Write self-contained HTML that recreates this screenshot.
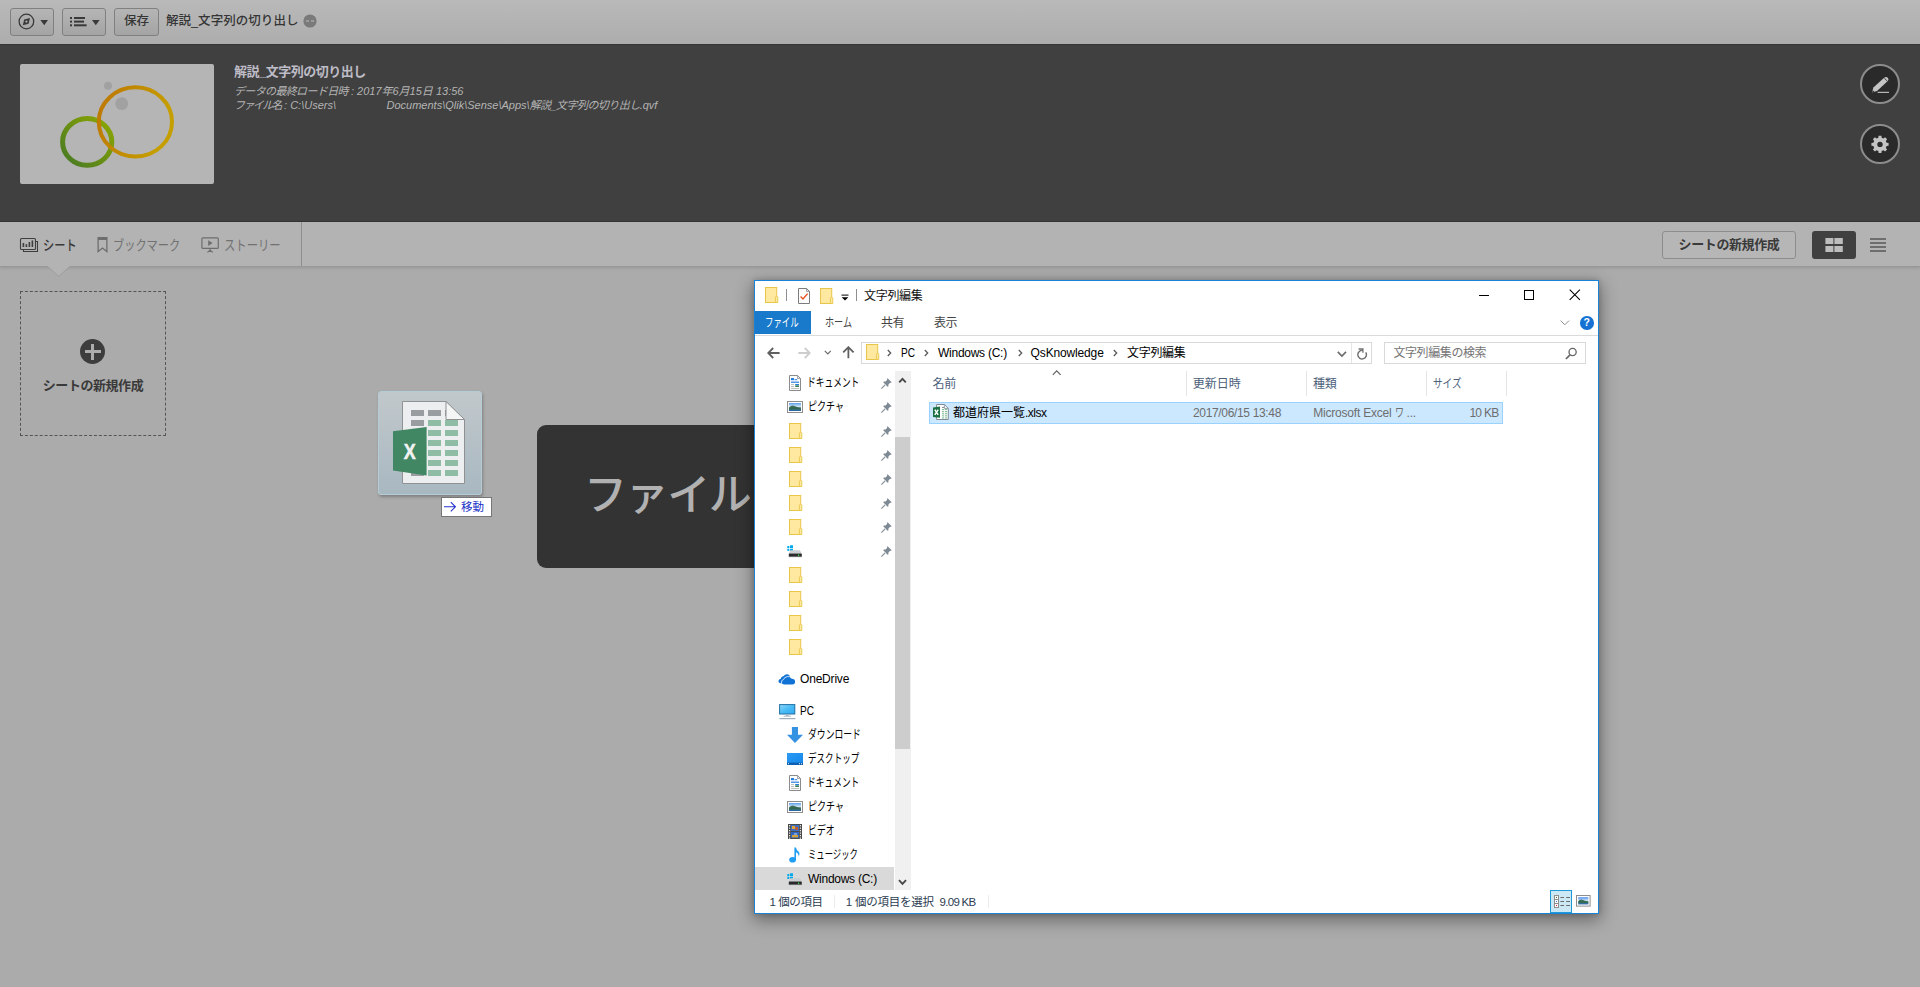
<!DOCTYPE html>
<html lang="ja">
<head>
<meta charset="utf-8">
<title>解説_文字列の切り出し</title>
<style>
html,body{margin:0;padding:0;}
body{width:1920px;height:987px;overflow:hidden;position:relative;background:#ababab;
 font-family:"Liberation Sans","Noto Sans CJK JP",sans-serif;color:#333;}
.abs{position:absolute;}
/* ---------- Qlik top toolbar ---------- */
#topbar{left:0;top:0;width:1920px;height:44px;background:linear-gradient(#b9b9b9,#adadad);}
.tbtn{position:absolute;top:8px;height:26px;border:1px solid #808080;border-radius:3px;
 background:linear-gradient(#b5b5b5,#a4a4a4);box-sizing:content-box;}
#apptitle{left:166px;top:11px;font-size:12.5px;line-height:20px;color:#353535;letter-spacing:.05px;white-space:nowrap;font-weight:500;}
/* ---------- dark header ---------- */
#hdr{left:0;top:44px;width:1920px;height:178px;background:#404040;box-shadow:inset 0 1px 0 #363636, inset 0 -1px 0 #353535;}
#thumb{left:20px;top:64px;width:194px;height:120px;background:#b5b5b5;border-radius:2px;}
#htitle{left:234px;top:63px;font-size:13px;line-height:18px;color:#bebcc6;font-weight:bold;letter-spacing:-.5px;white-space:nowrap;}
.hsub{left:234px;font-size:11px;line-height:14px;color:#b4b4b4;font-style:italic;white-space:nowrap;}
.circbtn{width:36px;height:36px;border:2px solid #8c8c8c;position:absolute;border-radius:50%;background:#2a2a2a;box-sizing:content-box;}
/* ---------- sub toolbar ---------- */
#subbar{left:0;top:222px;width:1920px;height:44px;background:#b3b3b3;border-bottom:1px solid #999;box-shadow:0 1px 3px rgba(0,0,0,.12);}
.tab{position:absolute;top:236px;font-size:14px;line-height:18px;white-space:nowrap;}
/* ---------- new sheet tile ---------- */
#newsheet{left:20px;top:291px;width:144px;height:143px;border:1px dashed #555;}
/* ---------- explorer ---------- */
#exp{left:754px;top:280px;width:843px;height:632px;background:#fff;border:1px solid #1883d7;
 box-shadow:0 5px 16px 1px rgba(0,0,0,.40), 0 0 5px rgba(0,0,0,.16);font-size:12px;color:#000;overflow:hidden;}
#exp .abs{position:absolute;}
#exp .t{font-size:12px;line-height:16px;white-space:nowrap;}
#exp .k{transform-origin:0 50%;}
#exp .k2{display:inline-block;transform:scaleX(.75);transform-origin:0 50%;}
</style>
</head>
<body>
<!-- TOPBAR -->
<div id="topbar" class="abs">
 <div class="tbtn" style="left:10px;width:42px;">
  <svg class="abs" style="left:0;top:0" width="42" height="26" viewBox="0 0 42 26">
   <circle cx="15.4" cy="12.5" r="7.3" fill="none" stroke="#3a3a3a" stroke-width="1.3"/>
   <path d="M19 9 L17.6 14.8 L11.8 16.2 L13.2 10.4 Z" fill="#3a3a3a"/>
   <circle cx="15.4" cy="12.6" r="1.1" fill="#b2b2b2"/>
   <path d="M29.4 11 L37 11 L33.2 16.2 Z" fill="#3a3a3a"/>
  </svg>
 </div>
 <div class="tbtn" style="left:62px;width:42px;">
  <svg class="abs" style="left:0;top:0" width="42" height="26" viewBox="0 0 42 26">
   <g fill="#3a3a3a">
    <rect x="7" y="8" width="2" height="2"/><rect x="11" y="8" width="11" height="2"/>
    <rect x="7" y="11.6" width="2" height="2"/><rect x="11" y="11.6" width="10" height="2"/>
    <rect x="7" y="15.3" width="2" height="2"/><rect x="11" y="15.3" width="12.6" height="2"/>
    <path d="M29 11 L36.6 11 L32.8 16.2 Z"/>
   </g>
  </svg>
 </div>
 <div class="tbtn" style="left:114px;width:43px;text-align:center;font-size:12.5px;line-height:25px;color:#353535;font-weight:500;">保存</div>
 <div id="apptitle" class="abs">解説_文字列の切り出し</div>
 <svg class="abs" style="left:302px;top:13.5px" width="16" height="14" viewBox="0 0 16 14">
  <circle cx="8" cy="7" r="6.6" fill="#7a7a7a"/>
  <rect x="4" y="6.4" width="3" height="1.2" fill="#b4b4b4"/><rect x="9" y="6.4" width="3" height="1.2" fill="#b4b4b4"/>
 </svg>
</div>
<!-- HEADER -->
<div id="hdr" class="abs"></div>
<div id="thumb" class="abs">
 <svg width="194" height="120" viewBox="0 0 194 120">
  <defs>
   <linearGradient id="gg" x1="0" y1="1" x2="1" y2="0"><stop offset="0" stop-color="#457826"/><stop offset="1" stop-color="#8fa800"/></linearGradient>
   <linearGradient id="og" x1="0" y1="0" x2="1" y2="0.3"><stop offset="0" stop-color="#bd7600"/><stop offset="1" stop-color="#c59f00"/></linearGradient>
  </defs>
  <circle cx="88" cy="21.7" r="4" fill="#a1a1a1"/>
  <circle cx="101.7" cy="39.6" r="6.4" fill="#a1a1a1"/>
  <ellipse cx="67.2" cy="77.9" rx="24.6" ry="23.4" fill="none" stroke="url(#gg)" stroke-width="5"/>
  <ellipse cx="115.4" cy="57.9" rx="36.6" ry="34.6" fill="none" stroke="url(#og)" stroke-width="4"/>
 </svg>
</div>
<div id="htitle" class="abs">解説_文字列の切り出し</div>
<div class="hsub abs" style="top:84px;"><span id="h1a" style="letter-spacing:-.65px">データの最終ロード日時</span> : 2017年6月15日 13:56</div>
<div class="hsub abs" style="top:98px;"><span id="h2a" style="letter-spacing:-1.6px">ファイル名</span>  : C:\Users\</div>
<div class="hsub abs" id="h2b" style="top:98px;left:386.5px;">Documents\Qlik\Sense\Apps\<span style="letter-spacing:-.55px">解説_文字列の切り出し</span>.qvf</div>
<div class="circbtn abs" style="left:1860px;top:64px;">
 <svg class="abs" style="left:-2px;top:-2px" width="40" height="40" viewBox="0 0 40 40">
  <path d="M12 28.6 L13.4 23.4 L24.4 13.4 Q26.2 12.2 27.8 13.8 Q29.2 15.6 27.8 17 L17 27 Z" fill="#c4c4c4"/>
  <path d="M12.2 28.4 L12.8 26.3 L14.3 27.8 Z" fill="#2a2a2a"/>
  <path d="M24.2 14 L27.4 17.2" stroke="#2a2a2a" stroke-width="0.9"/>
  <rect x="17.6" y="27.8" width="11.4" height="1.1" fill="#c4c4c4"/>
 </svg>
</div>
<div class="circbtn abs" style="left:1860px;top:124px;">
 <svg class="abs" style="left:-2px;top:-2px" width="40" height="40" viewBox="0 0 40 40">
  <path d="M26.60 18.76 L28.58 18.97 L28.58 21.83 L26.60 22.04 L25.83 23.91 L27.08 25.46 L25.06 27.48 L23.51 26.23 L21.64 27.00 L21.43 28.98 L18.57 28.98 L18.36 27.00 L16.49 26.23 L14.94 27.48 L12.92 25.46 L14.17 23.91 L13.40 22.04 L11.42 21.83 L11.42 18.97 L13.40 18.76 L14.17 16.89 L12.92 15.34 L14.94 13.32 L16.49 14.57 L18.36 13.80 L18.57 11.82 L21.43 11.82 L21.64 13.80 L23.51 14.57 L25.06 13.32 L27.08 15.34 L25.83 16.89 Z" fill="#c4c4c4"/>
  <circle cx="20" cy="20.4" r="2.7" fill="#2a2a2a"/>
 </svg>
</div>
<!-- SUBBAR -->
<div id="subbar" class="abs"></div>
<svg class="abs" style="left:16px;top:232px" width="30" height="26" viewBox="0 0 30 26">
 <g fill="none" stroke="#3e3e3e" stroke-width="1.1">
  <path d="M7.5 17.5 V19.5 H21.5 V9.5 H19.5"/>
  <rect x="4.5" y="6.5" width="15" height="11" rx="1"/>
 </g>
 <g fill="#3e3e3e"><rect x="6.6" y="11" width="1.6" height="4"/><rect x="9.6" y="12.2" width="1.6" height="2.8"/><rect x="12.6" y="10" width="1.6" height="5"/><rect x="15.6" y="8.4" width="1.6" height="6.6"/></g>
</svg>
<div class="tab" id="t1" style="left:42.8px;color:#3a3a3a;font-weight:500;transform:scaleX(.80);transform-origin:0 50%;">シート</div>
<svg class="abs" style="left:94px;top:234px" width="18" height="22" viewBox="0 0 18 22">
 <path d="M4.1 3.6 H12.9 V17.6 L8.5 14 L4.1 17.6 Z" fill="none" stroke="#6e6e6e" stroke-width="1.3"/>
 <rect x="4" y="3.4" width="9" height="2.6" fill="#6e6e6e"/>
</svg>
<div class="tab" id="t2" style="left:113px;color:#717171;transform:scaleX(.80);transform-origin:0 50%;">ブックマーク</div>
<svg class="abs" style="left:198px;top:234px" width="24" height="22" viewBox="0 0 24 22">
 <rect x="3.9" y="3.8" width="16.4" height="10.6" rx="1" fill="none" stroke="#6e6e6e" stroke-width="1.2"/>
 <path d="M10.2 6.2 L14.6 9.1 L10.2 12 Z" fill="#6e6e6e"/>
 <path d="M12.1 14.6 V16.4 M9.4 18.4 L12.1 16.2 L14.8 18.4" fill="none" stroke="#6e6e6e" stroke-width="1.2"/>
</svg>
<div class="tab" id="t3" style="left:224px;color:#717171;transform:scaleX(.81);transform-origin:0 50%;">ストーリー</div>
<div class="abs" style="left:301px;top:222px;width:1px;height:44px;background:#8e8e8e;"></div>
<svg class="abs" style="left:46px;top:266px" width="26" height="12" viewBox="0 0 26 12">
 <path d="M1.5 0 L12.7 10.2 L23.9 0 Z" fill="#b3b3b3"/>
 <path d="M1.5 0.5 L12.7 10.4 L23.9 0.5" fill="none" stroke="#9e9e9e" stroke-width="1"/>
</svg>
<div class="abs" id="nsb" style="left:1662px;top:231px;width:132px;height:26px;border:1px solid #8d8d8d;border-radius:3px;background:#b6b6b6;font-size:13px;font-weight:bold;line-height:26px;text-align:center;color:#3a3a3a;letter-spacing:-.4px;">シートの新規作成</div>
<div class="abs" style="left:1812px;top:231px;width:44px;height:28px;border-radius:3px;background:#404040;">
 <svg class="abs" style="left:0;top:0" width="44" height="28" viewBox="0 0 44 28"><g fill="#bdbdbd"><rect x="13.4" y="7" width="8" height="6"/><rect x="22.4" y="7" width="8.4" height="6"/><rect x="13.4" y="15" width="8" height="6"/><rect x="22.4" y="15" width="8.4" height="6"/></g></svg>
</div>
<svg class="abs" style="left:1866px;top:233px" width="24" height="24" viewBox="0 0 24 24"><g fill="#6e6e6e"><rect x="4" y="5" width="16" height="2"/><rect x="4" y="9" width="16" height="2"/><rect x="4" y="13" width="16" height="2"/><rect x="4" y="17" width="16" height="2"/></g></svg>
<div id="newsheet" class="abs"></div>
<div class="abs" style="left:80px;top:339px;width:25px;height:25px;border-radius:50%;background:#3d3d3d;"></div>
<div class="abs" style="left:84.5px;top:350px;width:16px;height:3px;background:#adadad;"></div>
<div class="abs" style="left:91px;top:343.5px;width:3px;height:16px;background:#adadad;"></div>
<div class="abs" id="nst" style="left:20px;top:377px;width:146px;text-align:center;font-size:13px;line-height:18px;font-weight:bold;color:#3a3a3a;letter-spacing:-.45px;white-space:nowrap;">シートの新規作成</div>
<!-- DRAG -->
<div class="abs" style="left:537px;top:425px;width:700px;height:143px;background:#333;border-radius:9px;"></div>
<div class="abs" id="droptxt" style="left:584px;top:463px;font-size:43px;line-height:64px;color:#b1b1b1;white-space:nowrap;letter-spacing:-1.4px;font-weight:500;">ファイル<span style="padding-left:16px">をドロップ</span></div>
<div class="abs" style="left:378px;top:391px;width:102px;height:102px;border:1px solid #b4ccd6;border-radius:3px;background:linear-gradient(#c1c8cb,#a8b8c1);box-shadow:1px 2px 3px rgba(0,0,0,.25);">
 <svg class="abs" style="left:-0.8px;top:-0.8px" width="102" height="102" viewBox="0 0 102 102">
  <path d="M24.5 10.5 H68 L86.5 28.5 V92.5 H24.5 Z" fill="#eceeef" stroke="#8f9193" stroke-width="1"/>
  <rect x="33" y="19" width="13" height="6" fill="#9a9d9f"/><rect x="50" y="19" width="13" height="6" fill="#9a9d9f"/><rect x="67" y="19" width="3" height="6" fill="#9a9d9f"/><rect x="33" y="29" width="13" height="6" fill="#9a9d9f"/><rect x="50" y="29" width="13" height="6" fill="#8ebca4"/><rect x="67" y="29" width="13" height="6" fill="#8ebca4"/><rect x="33" y="39" width="13" height="6" fill="#9a9d9f"/><rect x="50" y="39" width="13" height="6" fill="#8ebca4"/><rect x="67" y="39" width="13" height="6" fill="#8ebca4"/><rect x="33" y="49" width="13" height="6" fill="#9a9d9f"/><rect x="50" y="49" width="13" height="6" fill="#8ebca4"/><rect x="67" y="49" width="13" height="6" fill="#8ebca4"/><rect x="33" y="59" width="13" height="6" fill="#9a9d9f"/><rect x="50" y="59" width="13" height="6" fill="#8ebca4"/><rect x="67" y="59" width="13" height="6" fill="#8ebca4"/><rect x="33" y="69" width="13" height="6" fill="#9a9d9f"/><rect x="50" y="69" width="13" height="6" fill="#8ebca4"/><rect x="67" y="69" width="13" height="6" fill="#8ebca4"/><rect x="33" y="79" width="13" height="6" fill="#9a9d9f"/><rect x="50" y="79" width="13" height="6" fill="#8ebca4"/><rect x="67" y="79" width="13" height="6" fill="#8ebca4"/>
  <path d="M68 10.5 V28.5 H86.5 Z" fill="#f4f5f5" stroke="#8f9193" stroke-width="1" stroke-linejoin="round"/>
  <path d="M15 40.2 L48.6 36 V84.6 L15 79.6 Z" fill="#418764"/>
  <text x="31.8" y="68" text-anchor="middle" font-family="Liberation Sans, sans-serif" font-weight="bold" font-size="22" fill="#f2f2f2" stroke="#f2f2f2" stroke-width="0.5" textLength="12" lengthAdjust="spacingAndGlyphs">X</text>
 </svg>
</div>
<div class="abs" style="left:441px;top:497px;width:49px;height:18px;border:1px solid #767676;background:#fff;"></div>
<svg class="abs" style="left:443px;top:499px" width="16" height="16" viewBox="0 0 16 16"><path d="M1 7.8 H12 M7.8 3.2 L12.4 7.8 L7.8 12.4" fill="none" stroke="#2433cc" stroke-width="1.1"/></svg>
<div class="abs" id="movetxt" style="left:461px;top:498px;font-size:11.5px;line-height:18px;color:#2030c8;white-space:nowrap;">移動</div>
<!-- EXPLORER -->
<div id="exp" class="abs">
<svg class="abs" style="left:10px;top:6px;" width="14" height="16" viewBox="0 0 14 16"><rect x="0.5" y="0.5" width="11.2" height="15" fill="#ffe9a0" stroke="#e8c64c"/><path d="M10.4 15.5 V10.4 Q10.4 9.3 11.6 9.3 Q12.8 9.3 12.8 10.4 V15.5 Z" fill="#ffe9a0" stroke="#e8c64c" stroke-width="0.9"/></svg>
<div class="abs" style="left:31px;top:8px;width:1px;height:12px;background:#8f8f8f;"></div>
<svg class="abs" style="left:43px;top:7px;" width="13" height="16" viewBox="0 0 13 16"><path d="M0.5 0.5 H8.6 L11.5 3.4 V15.5 H0.5 Z" fill="#fdfdfd" stroke="#7c7c7c"/><path d="M8.6 0.5 V3.4 H11.5" fill="none" stroke="#7c7c7c" stroke-width="0.8"/><path d="M2.6 8.6 L5 11 L9.6 5.6" fill="none" stroke="#e8521e" stroke-width="1.4"/></svg>
<svg class="abs" style="left:65px;top:7px;" width="14" height="16" viewBox="0 0 14 16"><rect x="0.5" y="0.5" width="11.2" height="15" fill="#ffe9a0" stroke="#e8c64c"/><path d="M10.4 15.5 V10.4 Q10.4 9.3 11.6 9.3 Q12.8 9.3 12.8 10.4 V15.5 Z" fill="#ffe9a0" stroke="#e8c64c" stroke-width="0.9"/></svg>
<svg class="abs" style="left:85.5px;top:12.8px;" width="9" height="8" viewBox="0 0 9 8"><rect x="0.5" y="0.6" width="7" height="1" fill="#000"/><path d="M0.6 3.2 H7.4 L4 6.6 Z" fill="#000"/></svg>
<div class="abs" style="left:101px;top:8px;width:1px;height:12px;background:#8f8f8f;"></div>
<div class="abs t" id="x_title" style="left:109px;top:7px;letter-spacing:-.3px;color:#111;">文字列編集</div>
<div class="abs" style="left:724px;top:14px;width:10px;height:1px;background:#000;"></div>
<div class="abs" style="left:769px;top:9px;width:8px;height:8px;border:1px solid #000;"></div>
<svg class="abs" style="left:814.2px;top:8.2px;" width="12" height="12" viewBox="0 0 12 12"><path d="M0.7 0.7 L10.9 10.9 M10.9 0.7 L0.7 10.9" stroke="#000" stroke-width="1.05" fill="none"/></svg>
<div class="abs" style="left:0px;top:30px;width:56px;height:23px;background:#1979ca;"></div>
<div class="abs t k" id="x_file" style="left:10.4px;top:33.5px;color:#fff;transform:scaleX(.70);">ファイル</div>
<div class="abs t k" id="x_home" style="left:69.5px;top:33.5px;color:#444;transform:scaleX(.76);">ホーム</div>
<div class="abs t" id="x_share" style="left:126px;top:33.5px;color:#444;letter-spacing:-.6px;">共有</div>
<div class="abs t" id="x_view" style="left:179px;top:33.5px;color:#444;letter-spacing:-.4px;">表示</div>
<svg class="abs" style="left:805.4px;top:39.2px;" width="10" height="6" viewBox="0 0 10 6"><path d="M0.6 0.6 L4.8 4.8 L9 0.6" fill="none" stroke="#8a8a8a" stroke-width="1"/></svg>
<div class="abs" style="left:825px;top:35.2px;width:13.6px;height:13.6px;border-radius:50%;background:#1572d3;color:#fff;font:bold 10.5px/13.6px 'Liberation Sans',sans-serif;text-align:center;">?</div>
<div class="abs" style="left:0px;top:54px;width:843px;height:1px;background:#dadbdc;"></div>
<svg class="abs" style="left:12px;top:66px;" width="14" height="12" viewBox="0 0 14 12"><path d="M12.6 6 H1.4 M6.2 1 L1.2 6 L6.2 11" fill="none" stroke="#606060" stroke-width="1.8"/></svg>
<svg class="abs" style="left:42px;top:66px;" width="14" height="12" viewBox="0 0 14 12"><path d="M1.4 6 H12.6 M7.8 1 L12.8 6 L7.8 11" fill="none" stroke="#cdcdcd" stroke-width="1.8"/></svg>
<svg class="abs" style="left:68.6px;top:69px;" width="8" height="5" viewBox="0 0 8 5"><path d="M0.8 0.8 L3.8 3.8 L6.8 0.8" fill="none" stroke="#6a6a6a" stroke-width="1.2"/></svg>
<svg class="abs" style="left:86.8px;top:65.4px;" width="13" height="13" viewBox="0 0 13 13"><path d="M6.4 12.2 V1.4 M1.2 6.4 L6.4 1.2 L11.6 6.4" fill="none" stroke="#606060" stroke-width="1.8"/></svg>
<div class="abs" style="left:106px;top:61px;width:509px;height:20px;border:1px solid #d9d9d9;background:#fff;"></div>
<svg class="abs" style="left:111px;top:63px;" width="14" height="16" viewBox="0 0 14 16"><rect x="0.5" y="0.5" width="11.2" height="15" fill="#ffe9a0" stroke="#e8c64c"/><path d="M10.4 15.5 V10.4 Q10.4 9.3 11.6 9.3 Q12.8 9.3 12.8 10.4 V15.5 Z" fill="#ffe9a0" stroke="#e8c64c" stroke-width="0.9"/></svg>
<svg class="abs" style="left:132px;top:68.4px;" width="5" height="8" viewBox="0 0 5 8"><path d="M0.8 1 L3.7 4 L0.8 7" fill="none" stroke="#5a5a5a" stroke-width="1.3"/></svg>
<svg class="abs" style="left:169px;top:68.4px;" width="5" height="8" viewBox="0 0 5 8"><path d="M0.8 1 L3.7 4 L0.8 7" fill="none" stroke="#5a5a5a" stroke-width="1.3"/></svg>
<svg class="abs" style="left:262.6px;top:68.4px;" width="5" height="8" viewBox="0 0 5 8"><path d="M0.8 1 L3.7 4 L0.8 7" fill="none" stroke="#5a5a5a" stroke-width="1.3"/></svg>
<svg class="abs" style="left:358.2px;top:68.4px;" width="5" height="8" viewBox="0 0 5 8"><path d="M0.8 1 L3.7 4 L0.8 7" fill="none" stroke="#5a5a5a" stroke-width="1.3"/></svg>
<div class="abs t k" id="x_pc" style="left:146.2px;top:63.5px;transform:scaleX(.84);">PC</div>
<div class="abs t" id="x_win" style="left:183px;top:63.5px;letter-spacing:-.26px;">Windows (C:)</div>
<div class="abs t" id="x_qs" style="left:275.6px;top:63.5px;letter-spacing:-.15px;">QsKnowledge</div>
<div class="abs t" id="x_cur" style="left:372px;top:63.5px;letter-spacing:-.3px;">文字列編集</div>
<svg class="abs" style="left:582px;top:70px;" width="10" height="7" viewBox="0 0 10 7"><path d="M0.8 0.9 L4.9 5 L9 0.9" fill="none" stroke="#6a6a6a" stroke-width="1.6"/></svg>
<div class="abs" style="left:596px;top:62px;width:1px;height:20px;background:#e5e5e5;"></div>
<svg class="abs" style="left:600.8px;top:65.6px;" width="12" height="13" viewBox="0 0 12 13"><path d="M6.6 3.4 A4.3 4.3 0 1 0 9.7 5.3" fill="none" stroke="#6e6e6e" stroke-width="1.4"/><path d="M2.6 2 H6.9 V5.8" fill="none" stroke="#6e6e6e" stroke-width="1.3"/></svg>
<div class="abs" style="left:629px;top:61px;width:200px;height:20px;border:1px solid #d9d9d9;background:#fff;"></div>
<div class="abs t" id="x_search" style="left:638.4px;top:64px;color:#757575;letter-spacing:-.4px;">文字列編集の検索</div>
<svg class="abs" style="left:810px;top:66.4px;" width="13" height="13" viewBox="0 0 13 13"><circle cx="7.6" cy="5" r="3.6" fill="none" stroke="#666" stroke-width="1.3"/><path d="M5 7.8 L0.9 12" stroke="#666" stroke-width="1.7" fill="none"/></svg>
<svg class="abs" style="left:296.6px;top:89.4px;" width="10" height="6" viewBox="0 0 10 6"><path d="M0.8 4.8 L4.7 0.9 L8.6 4.8" fill="none" stroke="#606060" stroke-width="1.2"/></svg>
<div class="abs" style="left:431px;top:90px;width:1px;height:25px;background:#e5e5e5;"></div>
<div class="abs" style="left:551px;top:90px;width:1px;height:25px;background:#e5e5e5;"></div>
<div class="abs" style="left:671px;top:90px;width:1px;height:25px;background:#e5e5e5;"></div>
<div class="abs" style="left:751px;top:90px;width:1px;height:25px;background:#e5e5e5;"></div>
<div class="abs t" id="x_hname" style="left:177.5px;top:95px;color:#4c607a;letter-spacing:-.3px;">名前</div>
<div class="abs t" id="x_hdate" style="left:437.8px;top:95px;color:#4c607a;letter-spacing:0px;">更新日時</div>
<div class="abs t" id="x_htype" style="left:558px;top:95px;color:#4c607a;letter-spacing:-.3px;">種類</div>
<div class="abs t k" id="x_hsize" style="left:678px;top:95px;color:#4c607a;transform:scaleX(.80);">サイズ</div>
<div class="abs" style="left:174px;top:121px;width:572px;height:20px;border:1px solid #99d1ff;background:#cce8ff;"></div>
<svg class="abs" style="left:178px;top:123px;" width="16" height="16" viewBox="0 0 16 16"><path d="M3.6 0.5 H11.4 L15.3 4.4 V15.5 H3.6 Z" fill="#fff" stroke="#7f8a96"/><path d="M11.4 0.5 V4.4 H15.3" fill="none" stroke="#7f8a96" stroke-width="0.8"/><rect x="9" y="2.9" width="2" height="1.1" fill="#8a9097"/><rect x="9.0" y="5.0" width="2.2" height="1.1" fill="#7dbb95"/><rect x="12.0" y="5.0" width="2.2" height="1.1" fill="#7dbb95"/><rect x="9.0" y="7.1" width="2.2" height="1.1" fill="#7dbb95"/><rect x="12.0" y="7.1" width="2.2" height="1.1" fill="#7dbb95"/><rect x="9.0" y="9.2" width="2.2" height="1.1" fill="#7dbb95"/><rect x="12.0" y="9.2" width="2.2" height="1.1" fill="#7dbb95"/><rect x="9.0" y="11.3" width="2.2" height="1.1" fill="#7dbb95"/><rect x="12.0" y="11.3" width="2.2" height="1.1" fill="#7dbb95"/><rect x="9.0" y="13.4" width="2.2" height="1.1" fill="#7dbb95"/><rect x="12.0" y="13.4" width="2.2" height="1.1" fill="#7dbb95"/><path d="M0 3.4 L7 2.6 V13.8 L0 13 Z" fill="#1d7044"/><path d="M1.8 5.6 L5.2 10.8 M5.2 5.6 L1.8 10.8" stroke="#fff" stroke-width="1.5" fill="none"/></svg>
<div class="abs t" id="x_fname" style="left:198px;top:123.5px;">都道府県一覧<span style="letter-spacing:-.5px">.xlsx</span></div>
<div class="abs t" id="x_fdate" style="left:438px;top:123.5px;color:#6d6d6d;letter-spacing:-.34px;">2017/06/15 13:48</div>
<div class="abs t" id="x_ftype" style="left:558.2px;top:123.5px;color:#6d6d6d;letter-spacing:-.2px;">Microsoft Excel <span class="k2">ワ</span>...</div>
<div class="abs t" id="x_fsize" style="left:683.6px;top:123.5px;width:60px;text-align:right;color:#6d6d6d;letter-spacing:-.7px;">10 KB</div>
<svg class="abs" style="left:34px;top:94px;" width="12" height="16" viewBox="0 0 12 16"><path d="M0.5 0.5 H8.5 L11.5 3.5 V15.5 H0.5 Z" fill="#fff" stroke="#8b8b8b"/><path d="M8.5 0.5 V3.5 H11.5" fill="none" stroke="#8b8b8b" stroke-width="0.8"/><g fill="#2a7de0"><rect x="2" y="3" width="3" height="2.2"/><rect x="5.6" y="4.2" width="2.6" height="1"/><rect x="2" y="6.6" width="8" height="1.2"/><rect x="6.2" y="9" width="3.8" height="1"/></g><rect x="6.2" y="10.3" width="3.8" height="1.7" fill="#3f7f5a"/><g fill="#b5b5b5"><rect x="2" y="9.2" width="3" height="0.9"/><rect x="2" y="11.2" width="3" height="0.9"/><rect x="2" y="13.2" width="8" height="0.9"/></g></svg>
<div class="abs t k" id="x_n1" style="left:51.9px;top:93.5px;transform:scaleX(.727);">ドキュメント</div>
<svg class="abs" style="left:125.6px;top:97px;" width="11" height="11" viewBox="0 0 11 11"><g fill="#7d8994" stroke="none"><path d="M6.6 0.3 L10.6 4.2 L9.7 5 L9.1 4.7 L7.4 6.5 Q7.8 8 6.9 9 L2 4 Q3.1 3.1 4.5 3.6 L6.3 1.8 L5.9 1.1 Z"/></g><path d="M0.4 10.6 L4.1 6.9" stroke="#7d8994" stroke-width="1.1" fill="none"/></svg>
<svg class="abs" style="left:32px;top:120px;" width="16" height="12" viewBox="0 0 16 12"><defs><linearGradient id="pg1" x1="0" y1="0" x2="0" y2="1"><stop offset="0" stop-color="#5aa0ee"/><stop offset="0.45" stop-color="#d5e6f6"/><stop offset="0.55" stop-color="#6d9a8c"/><stop offset="1" stop-color="#1f5fa8"/></linearGradient></defs><rect x="0.5" y="0.5" width="15" height="11" fill="#fff" stroke="#8e8e8e"/><rect x="2" y="2" width="12" height="8" fill="url(#pg1)"/><path d="M2 7.6 Q3 4.6 6 4.6 Q8.5 5.6 12 6.8 L14 7.6 V8.4 H2 Z" fill="#2e6547" opacity="0.9"/></svg>
<div class="abs t k" id="x_n2" style="left:53px;top:117.5px;transform:scaleX(.755);">ピクチャ</div>
<svg class="abs" style="left:125.6px;top:121px;" width="11" height="11" viewBox="0 0 11 11"><g fill="#7d8994" stroke="none"><path d="M6.6 0.3 L10.6 4.2 L9.7 5 L9.1 4.7 L7.4 6.5 Q7.8 8 6.9 9 L2 4 Q3.1 3.1 4.5 3.6 L6.3 1.8 L5.9 1.1 Z"/></g><path d="M0.4 10.6 L4.1 6.9" stroke="#7d8994" stroke-width="1.1" fill="none"/></svg>
<svg class="abs" style="left:34px;top:142.0px;" width="14" height="16" viewBox="0 0 14 16"><rect x="0.5" y="0.5" width="11.2" height="15" fill="#ffe9a0" stroke="#e8c64c"/><path d="M10.4 15.5 V10.4 Q10.4 9.3 11.6 9.3 Q12.8 9.3 12.8 10.4 V15.5 Z" fill="#ffe9a0" stroke="#e8c64c" stroke-width="0.9"/></svg>
<svg class="abs" style="left:125.6px;top:144.6px;" width="11" height="11" viewBox="0 0 11 11"><g fill="#7d8994" stroke="none"><path d="M6.6 0.3 L10.6 4.2 L9.7 5 L9.1 4.7 L7.4 6.5 Q7.8 8 6.9 9 L2 4 Q3.1 3.1 4.5 3.6 L6.3 1.8 L5.9 1.1 Z"/></g><path d="M0.4 10.6 L4.1 6.9" stroke="#7d8994" stroke-width="1.1" fill="none"/></svg>
<svg class="abs" style="left:34px;top:166.0px;" width="14" height="16" viewBox="0 0 14 16"><rect x="0.5" y="0.5" width="11.2" height="15" fill="#ffe9a0" stroke="#e8c64c"/><path d="M10.4 15.5 V10.4 Q10.4 9.3 11.6 9.3 Q12.8 9.3 12.8 10.4 V15.5 Z" fill="#ffe9a0" stroke="#e8c64c" stroke-width="0.9"/></svg>
<svg class="abs" style="left:125.6px;top:168.6px;" width="11" height="11" viewBox="0 0 11 11"><g fill="#7d8994" stroke="none"><path d="M6.6 0.3 L10.6 4.2 L9.7 5 L9.1 4.7 L7.4 6.5 Q7.8 8 6.9 9 L2 4 Q3.1 3.1 4.5 3.6 L6.3 1.8 L5.9 1.1 Z"/></g><path d="M0.4 10.6 L4.1 6.9" stroke="#7d8994" stroke-width="1.1" fill="none"/></svg>
<svg class="abs" style="left:34px;top:190.0px;" width="14" height="16" viewBox="0 0 14 16"><rect x="0.5" y="0.5" width="11.2" height="15" fill="#ffe9a0" stroke="#e8c64c"/><path d="M10.4 15.5 V10.4 Q10.4 9.3 11.6 9.3 Q12.8 9.3 12.8 10.4 V15.5 Z" fill="#ffe9a0" stroke="#e8c64c" stroke-width="0.9"/></svg>
<svg class="abs" style="left:125.6px;top:192.6px;" width="11" height="11" viewBox="0 0 11 11"><g fill="#7d8994" stroke="none"><path d="M6.6 0.3 L10.6 4.2 L9.7 5 L9.1 4.7 L7.4 6.5 Q7.8 8 6.9 9 L2 4 Q3.1 3.1 4.5 3.6 L6.3 1.8 L5.9 1.1 Z"/></g><path d="M0.4 10.6 L4.1 6.9" stroke="#7d8994" stroke-width="1.1" fill="none"/></svg>
<svg class="abs" style="left:34px;top:214.0px;" width="14" height="16" viewBox="0 0 14 16"><rect x="0.5" y="0.5" width="11.2" height="15" fill="#ffe9a0" stroke="#e8c64c"/><path d="M10.4 15.5 V10.4 Q10.4 9.3 11.6 9.3 Q12.8 9.3 12.8 10.4 V15.5 Z" fill="#ffe9a0" stroke="#e8c64c" stroke-width="0.9"/></svg>
<svg class="abs" style="left:125.6px;top:216.6px;" width="11" height="11" viewBox="0 0 11 11"><g fill="#7d8994" stroke="none"><path d="M6.6 0.3 L10.6 4.2 L9.7 5 L9.1 4.7 L7.4 6.5 Q7.8 8 6.9 9 L2 4 Q3.1 3.1 4.5 3.6 L6.3 1.8 L5.9 1.1 Z"/></g><path d="M0.4 10.6 L4.1 6.9" stroke="#7d8994" stroke-width="1.1" fill="none"/></svg>
<svg class="abs" style="left:34px;top:238.0px;" width="14" height="16" viewBox="0 0 14 16"><rect x="0.5" y="0.5" width="11.2" height="15" fill="#ffe9a0" stroke="#e8c64c"/><path d="M10.4 15.5 V10.4 Q10.4 9.3 11.6 9.3 Q12.8 9.3 12.8 10.4 V15.5 Z" fill="#ffe9a0" stroke="#e8c64c" stroke-width="0.9"/></svg>
<svg class="abs" style="left:125.6px;top:240.6px;" width="11" height="11" viewBox="0 0 11 11"><g fill="#7d8994" stroke="none"><path d="M6.6 0.3 L10.6 4.2 L9.7 5 L9.1 4.7 L7.4 6.5 Q7.8 8 6.9 9 L2 4 Q3.1 3.1 4.5 3.6 L6.3 1.8 L5.9 1.1 Z"/></g><path d="M0.4 10.6 L4.1 6.9" stroke="#7d8994" stroke-width="1.1" fill="none"/></svg>
<svg class="abs" style="left:32px;top:264.0px;" width="16" height="13" viewBox="0 0 16 13"><g fill="#00a9ec"><rect x="0.3" y="1" width="2" height="2.1"/><rect x="3" y="0.3" width="3" height="2.8"/><rect x="0.3" y="3.8" width="2" height="2.1"/><rect x="3" y="3.8" width="3" height="2.8"/></g><path d="M3.2 5.2 H12.8 L14.8 8.6 H1.8 Z" fill="#c9ced3"/><rect x="1.8" y="8.4" width="13" height="3.6" rx="0.6" fill="#2a2a2a"/><rect x="1.8" y="11.6" width="13" height="0.7" fill="#bfc5ca"/><circle cx="11.6" cy="10.2" r="0.8" fill="#38e03a"/></svg>
<svg class="abs" style="left:125.6px;top:264.6px;" width="11" height="11" viewBox="0 0 11 11"><g fill="#7d8994" stroke="none"><path d="M6.6 0.3 L10.6 4.2 L9.7 5 L9.1 4.7 L7.4 6.5 Q7.8 8 6.9 9 L2 4 Q3.1 3.1 4.5 3.6 L6.3 1.8 L5.9 1.1 Z"/></g><path d="M0.4 10.6 L4.1 6.9" stroke="#7d8994" stroke-width="1.1" fill="none"/></svg>
<svg class="abs" style="left:34px;top:286.0px;" width="14" height="16" viewBox="0 0 14 16"><rect x="0.5" y="0.5" width="11.2" height="15" fill="#ffe9a0" stroke="#e8c64c"/><path d="M10.4 15.5 V10.4 Q10.4 9.3 11.6 9.3 Q12.8 9.3 12.8 10.4 V15.5 Z" fill="#ffe9a0" stroke="#e8c64c" stroke-width="0.9"/></svg>
<svg class="abs" style="left:34px;top:310.0px;" width="14" height="16" viewBox="0 0 14 16"><rect x="0.5" y="0.5" width="11.2" height="15" fill="#ffe9a0" stroke="#e8c64c"/><path d="M10.4 15.5 V10.4 Q10.4 9.3 11.6 9.3 Q12.8 9.3 12.8 10.4 V15.5 Z" fill="#ffe9a0" stroke="#e8c64c" stroke-width="0.9"/></svg>
<svg class="abs" style="left:34px;top:334.0px;" width="14" height="16" viewBox="0 0 14 16"><rect x="0.5" y="0.5" width="11.2" height="15" fill="#ffe9a0" stroke="#e8c64c"/><path d="M10.4 15.5 V10.4 Q10.4 9.3 11.6 9.3 Q12.8 9.3 12.8 10.4 V15.5 Z" fill="#ffe9a0" stroke="#e8c64c" stroke-width="0.9"/></svg>
<svg class="abs" style="left:34px;top:358.0px;" width="14" height="16" viewBox="0 0 14 16"><rect x="0.5" y="0.5" width="11.2" height="15" fill="#ffe9a0" stroke="#e8c64c"/><path d="M10.4 15.5 V10.4 Q10.4 9.3 11.6 9.3 Q12.8 9.3 12.8 10.4 V15.5 Z" fill="#ffe9a0" stroke="#e8c64c" stroke-width="0.9"/></svg>
<svg class="abs" style="left:23.4px;top:392.8px;" width="18" height="11" viewBox="0 0 18 11"><path d="M2.4 9.2 Q0.3 9 0.4 7 Q0.6 5.3 2.6 5.1 Q3 2.5 5.7 2.1 Q7 0.1 9.3 0.3 Q11.4 0.6 12.2 2.8 L12 9.2 Z" fill="#0f72d4"/><path d="M6.2 10.5 Q3.8 10.4 3.8 8.2 Q3.9 6.1 6 5.9 Q6.6 3.3 9.6 3.1 Q12.3 2.5 13.7 4.7 Q17.1 4.9 17.1 7.8 Q17 10.5 14.4 10.5 Z" fill="#0f72d4"/><path d="M3.5 9 Q3.1 6 5.6 5.5 Q6.3 2.9 9.5 2.6 Q12 2.1 13.4 3.9" fill="none" stroke="#fff" stroke-width="0.8"/></svg>
<div class="abs t" id="x_od" style="left:45px;top:389.5px;letter-spacing:-.19px;">OneDrive</div>
<svg class="abs" style="left:23.6px;top:422.6px;" width="17" height="16" viewBox="0 0 17 16"><defs><linearGradient id="pcg" x1="0" y1="0" x2="1" y2="1"><stop offset="0" stop-color="#8fd8fb"/><stop offset="0.5" stop-color="#49bcf5"/><stop offset="1" stop-color="#2fa8ee"/></linearGradient></defs><rect x="0.6" y="0.6" width="15.2" height="9.4" fill="url(#pcg)" stroke="#226fa6" stroke-width="1"/><rect x="7" y="10.4" width="2.6" height="1.4" fill="#9fb0bd"/><rect x="4.6" y="11.7" width="7.4" height="0.9" fill="#9fb0bd"/><rect x="0.4" y="14" width="16" height="1.2" fill="#9fb0bd"/></svg>
<div class="abs t k" id="x_pc2" style="left:45.2px;top:421.5px;transform:scaleX(.84);">PC</div>
<svg class="abs" style="left:32px;top:446px;" width="16" height="16" viewBox="0 0 16 16"><path d="M4.9 0 H11 V7.8 H16 L8 16 L0 7.8 H4.9 Z" fill="#3592e3"/></svg>
<div class="abs t k" id="x_n3" style="left:53px;top:445.5px;transform:scaleX(.735);">ダウンロード</div>
<svg class="abs" style="left:32px;top:472.2px;" width="16" height="12" viewBox="0 0 16 12"><defs><linearGradient id="dkg" x1="0" y1="0" x2="1" y2="1"><stop offset="0" stop-color="#2d9bf3"/><stop offset="0.5" stop-color="#1e90f0"/><stop offset="1" stop-color="#1787e8"/></linearGradient></defs><rect x="0" y="0" width="16" height="12" fill="url(#dkg)"/><rect x="0" y="9.6" width="16" height="2.4" fill="#0d5fb2"/><rect x="1" y="10.3" width="1" height="0.9" fill="#fff"/><rect x="12" y="10.3" width="1" height="0.9" fill="#fff"/><rect x="14" y="10.3" width="1" height="0.9" fill="#fff"/></svg>
<div class="abs t k" id="x_n4" style="left:53px;top:469.5px;transform:scaleX(.712);">デスクトップ</div>
<svg class="abs" style="left:34px;top:494px;" width="12" height="16" viewBox="0 0 12 16"><path d="M0.5 0.5 H8.5 L11.5 3.5 V15.5 H0.5 Z" fill="#fff" stroke="#8b8b8b"/><path d="M8.5 0.5 V3.5 H11.5" fill="none" stroke="#8b8b8b" stroke-width="0.8"/><g fill="#2a7de0"><rect x="2" y="3" width="3" height="2.2"/><rect x="5.6" y="4.2" width="2.6" height="1"/><rect x="2" y="6.6" width="8" height="1.2"/><rect x="6.2" y="9" width="3.8" height="1"/></g><rect x="6.2" y="10.3" width="3.8" height="1.7" fill="#3f7f5a"/><g fill="#b5b5b5"><rect x="2" y="9.2" width="3" height="0.9"/><rect x="2" y="11.2" width="3" height="0.9"/><rect x="2" y="13.2" width="8" height="0.9"/></g></svg>
<div class="abs t k" id="x_n5" style="left:51.9px;top:493.5px;transform:scaleX(.727);">ドキュメント</div>
<svg class="abs" style="left:32px;top:520px;" width="16" height="12" viewBox="0 0 16 12"><defs><linearGradient id="pg2" x1="0" y1="0" x2="0" y2="1"><stop offset="0" stop-color="#5aa0ee"/><stop offset="0.45" stop-color="#d5e6f6"/><stop offset="0.55" stop-color="#6d9a8c"/><stop offset="1" stop-color="#1f5fa8"/></linearGradient></defs><rect x="0.5" y="0.5" width="15" height="11" fill="#fff" stroke="#8e8e8e"/><rect x="2" y="2" width="12" height="8" fill="url(#pg2)"/><path d="M2 7.6 Q3 4.6 6 4.6 Q8.5 5.6 12 6.8 L14 7.6 V8.4 H2 Z" fill="#2e6547" opacity="0.9"/></svg>
<div class="abs t k" id="x_n6" style="left:53px;top:517.5px;transform:scaleX(.755);">ピクチャ</div>
<svg class="abs" style="left:33px;top:543px;" width="14" height="15" viewBox="0 0 14 15"><rect x="0" y="0" width="14" height="15" fill="#4a4a4a"/><rect x="1" y="1.0" width="1.2" height="1.3" fill="#e8e8e8"/><rect x="11.8" y="1.0" width="1.2" height="1.3" fill="#e8e8e8"/><rect x="1" y="3.5" width="1.2" height="1.3" fill="#e8e8e8"/><rect x="11.8" y="3.5" width="1.2" height="1.3" fill="#e8e8e8"/><rect x="1" y="6.0" width="1.2" height="1.3" fill="#e8e8e8"/><rect x="11.8" y="6.0" width="1.2" height="1.3" fill="#e8e8e8"/><rect x="1" y="8.5" width="1.2" height="1.3" fill="#e8e8e8"/><rect x="11.8" y="8.5" width="1.2" height="1.3" fill="#e8e8e8"/><rect x="1" y="11.0" width="1.2" height="1.3" fill="#e8e8e8"/><rect x="11.8" y="11.0" width="1.2" height="1.3" fill="#e8e8e8"/><rect x="1" y="13.5" width="1.2" height="1.3" fill="#e8e8e8"/><rect x="11.8" y="13.5" width="1.2" height="1.3" fill="#e8e8e8"/><rect x="3" y="1" width="8" height="6" fill="#3a6fc4"/><rect x="3" y="8" width="8" height="6" fill="#2f66c0"/><rect x="4" y="2" width="3" height="3" fill="#e2a83a"/><rect x="7.4" y="3" width="2.6" height="3" fill="#c9552f"/><rect x="4" y="11" width="6" height="2.4" fill="#d8a23a"/><rect x="6" y="9" width="3" height="2" fill="#7d9fd8"/></svg>
<div class="abs t k" id="x_n7" style="left:53.3px;top:541.5px;transform:scaleX(.74);">ビデオ</div>
<svg class="abs" style="left:34px;top:566px;" width="12" height="16" viewBox="0 0 12 16"><ellipse cx="3.6" cy="12.8" rx="3.4" ry="2.8" fill="#1e9df2"/><path d="M5.4 13 V0.4 H7 Q7.4 3 9.4 4.6 Q11.4 6.6 9.6 9.8 Q10 6.6 7 5.2 V13 Z" fill="#1e9df2"/></svg>
<div class="abs t k" id="x_n8" style="left:53.3px;top:565.5px;transform:scaleX(.695);">ミュージック</div>
<div class="abs" style="left:0px;top:586px;width:139px;height:23px;background:#d9d9d9;"></div>
<svg class="abs" style="left:31.6px;top:592px;" width="16" height="13" viewBox="0 0 16 13"><g fill="#00a9ec"><rect x="0.3" y="1" width="2" height="2.1"/><rect x="3" y="0.3" width="3" height="2.8"/><rect x="0.3" y="3.8" width="2" height="2.1"/><rect x="3" y="3.8" width="3" height="2.8"/></g><path d="M3.2 5.2 H12.8 L14.8 8.6 H1.8 Z" fill="#c9ced3"/><rect x="1.8" y="8.4" width="13" height="3.6" rx="0.6" fill="#2a2a2a"/><rect x="1.8" y="11.6" width="13" height="0.7" fill="#bfc5ca"/><circle cx="11.6" cy="10.2" r="0.8" fill="#38e03a"/></svg>
<div class="abs t" id="x_win2" style="left:53px;top:589.5px;letter-spacing:-.26px;">Windows (C:)</div>
<div class="abs" style="left:140px;top:90px;width:16px;height:519px;background:#f0f0f0;"></div>
<div class="abs" style="left:140px;top:156px;width:15px;height:312px;background:#cdcdcd;"></div>
<svg class="abs" style="left:143.2px;top:95.8px;" width="9" height="7" viewBox="0 0 9 7"><path d="M1.2 5.4 L4.5 1.9 L7.8 5.4" fill="none" stroke="#484848" stroke-width="1.9"/></svg>
<svg class="abs" style="left:143.2px;top:598px;" width="9" height="7" viewBox="0 0 9 7"><path d="M1 1.2 L4.5 4.9 L8 1.2" fill="none" stroke="#484848" stroke-width="1.9"/></svg>
<div class="abs t" id="x_s1" style="left:14.6px;top:612.8px;color:#2b3b50;font-size:11.5px;letter-spacing:-.45px;">1 個の項目</div>
<div class="abs" style="left:79px;top:614px;width:1px;height:13px;background:#ececec;"></div>
<div class="abs t" id="x_s2" style="left:90.8px;top:612.8px;color:#2b3b50;font-size:11.5px;letter-spacing:-.25px;">1 個の項目を選択&nbsp; <span style="letter-spacing:-.7px">9.09 KB</span></div>
<div class="abs" style="left:233px;top:614px;width:1px;height:13px;background:#ececec;"></div>
<div class="abs" style="left:795px;top:609px;width:20px;height:21px;border:1px solid #1c9bd9;background:#cce8f5;"></div>
<svg class="abs" style="left:799px;top:614px;" width="18" height="14" viewBox="0 0 18 14"><rect x="0.5" y="0.5" width="4" height="12" fill="#fff" stroke="#8e8e8e"/><path d="M0.5 4.5 H4.5 M0.5 8.5 H4.5" stroke="#8e8e8e"/><rect x="2" y="2" width="1" height="1" fill="#2e6b4a"/><rect x="2" y="6" width="1" height="1" fill="#3b82f6"/><rect x="2" y="10" width="1" height="1" fill="#e02020"/><g fill="#6a6a6a"><rect x="6.4" y="2" width="3.6" height="1"/><rect x="12.2" y="2" width="3.8" height="1"/><rect x="6.4" y="6" width="3.6" height="1"/><rect x="12.2" y="6" width="3.8" height="1"/><rect x="6.4" y="10" width="3.6" height="1"/><rect x="12.2" y="10" width="3.8" height="1"/></g></svg>
<svg class="abs" style="left:821px;top:614px;" width="15" height="12" viewBox="0 0 15 12"><defs><linearGradient id="lg3" x1="0" y1="0" x2="0" y2="1"><stop offset="0" stop-color="#4a90f0"/><stop offset="0.45" stop-color="#cfe2f5"/><stop offset="0.6" stop-color="#5f8f80"/><stop offset="1" stop-color="#1f5fa8"/></linearGradient></defs><rect x="0.5" y="0.5" width="13.6" height="10.6" fill="#fff" stroke="#8e8e8e"/><rect x="2.2" y="2.2" width="10.2" height="7.2" fill="url(#lg3)"/><path d="M2.2 7 Q3.2 4.4 5.6 4.6 L12.4 7 V7.8 H2.2 Z" fill="#2e6547" opacity=".9"/></svg>
</div>
</body>
</html>
